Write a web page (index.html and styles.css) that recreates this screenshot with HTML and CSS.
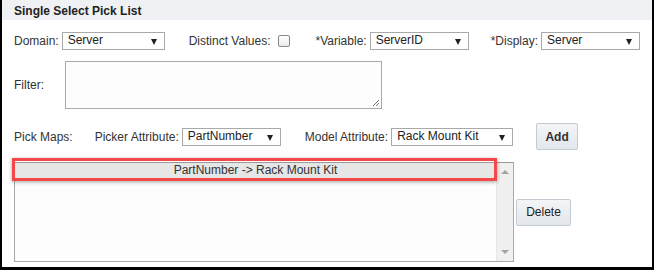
FILE: index.html
```html
<!DOCTYPE html>
<html>
<head>
<meta charset="utf-8">
<link rel="stylesheet" href="styles.css">
</head>
<body>
<div class="frame">
  <div class="header">Single Select Pick List</div>
  <div class="content">
    <div class="row row-top">
      <span class="lbl">Domain:</span>
      <div class="sel sel-domain"><span>Server</span><i class="arrow"></i></div>
      <span class="lbl lbl-distinct">Distinct Values:</span>
      <span class="checkbox"></span>
      <span class="lbl lbl-variable">*Variable:</span>
      <div class="sel sel-var"><span>ServerID</span><i class="arrow"></i></div>
      <span class="lbl lbl-display">*Display:</span>
      <div class="sel sel-disp"><span>Server</span><i class="arrow"></i></div>
    </div>
    <div class="row row-filter">
      <span class="lbl lbl-filter">Filter:</span>
      <div class="textarea">
        <svg class="grip" width="8" height="8" viewBox="0 0 8 8"><path d="M7 1 L1 7 M7 4 L4 7" stroke="#777" stroke-width="1" fill="none"/></svg>
      </div>
    </div>
    <div class="row row-maps">
      <span class="lbl">Pick Maps:</span>
      <span class="lbl lbl-picker">Picker Attribute:</span>
      <div class="sel sel-picker"><span>PartNumber</span><i class="arrow"></i></div>
      <span class="lbl lbl-model">Model Attribute:</span>
      <div class="sel sel-model"><span>Rack Mount Kit</span><i class="arrow"></i></div>
      <button class="btn btn-add">Add</button>
    </div>
    <div class="row row-list">
      <div class="listbox">
        <div class="options">
          <div class="option">PartNumber -&gt; Rack Mount Kit</div>
        </div>
        <div class="scrollbar">
          <i class="sb-up"></i>
          <i class="sb-down"></i>
        </div>
        <div class="highlight"></div>
      </div>
      <button class="btn btn-delete">Delete</button>
    </div>
  </div>
</div>
</body>
</html>
```
FILE: styles.css
```css
html, body {
  margin: 0;
  padding: 0;
  background: #fff;
}
body {
  font-family: "Liberation Sans", Arial, sans-serif;
  font-size: 12px;
  color: #333;
}
.frame {
  width: 654px;
  height: 270px;
  box-sizing: border-box;
  border: 2px solid #000;
  border-top: 0;
  border-bottom-width: 3px;
  overflow: hidden;
}
.header {
  height: 20px;
  background: #f0f1f5;
  padding-left: 12px;
  font-weight: bold;
  font-size: 12px;
  line-height: 22px;
  color: #222;
}
.content {
  padding: 12px 0 0 12px;
}
.row {
  display: flex;
  align-items: center;
}
.lbl {
  white-space: nowrap;
  color: #333;
}
.sel {
  position: relative;
  box-sizing: border-box;
  height: 18px;
  border: 1px solid #a9a9a9;
  background: #fff;
  padding-left: 5px;
  line-height: 15px;
  font-size: 12px;
  color: #222;
  margin-left: 3px;
}
.arrow {
  position: absolute;
  right: 7px;
  top: 6px;
  width: 0;
  height: 0;
  border-left: 3px solid transparent;
  border-right: 3px solid transparent;
  border-top: 6px solid #222;
}
.row-top { height: 17px; }
.sel-domain { width: 103px; }
.lbl-distinct { margin-left: 24px; }
.checkbox {
  box-sizing: border-box;
  width: 12px;
  height: 12px;
  border: 1px solid #8a8a8a;
  border-radius: 2px;
  background: linear-gradient(#fff, #eaeaea);
  margin-left: 7px;
}
.lbl-variable { margin-left: 26px; }
.sel-var { width: 99px; }
.lbl-display { margin-left: 22px; }
.sel-disp { width: 99px; }

.row-filter { margin-top: 12px; }
.lbl-filter { width: 51px; }
.textarea {
  position: relative;
  box-sizing: border-box;
  width: 317px;
  height: 48px;
  border: 1px solid #a9a9a9;
  background: #fdfdfd;
}
.grip {
  position: absolute;
  right: 1px;
  bottom: 1px;
}

.row-maps { margin-top: 14px; height: 27px; }
.lbl-picker { margin-left: 22px; }
.sel-picker { width: 99px; }
.lbl-model { margin-left: 24px; }
.sel-model { width: 122px; }
.btn {
  box-sizing: border-box;
  font-family: "Liberation Sans", Arial, sans-serif;
  font-size: 12px;
  font-weight: bold;
  color: #333;
  border: 1px solid #c3cad2;
  border-radius: 2px;
  background: linear-gradient(#f3f5f7, #e2e7eb);
  padding: 0;
  height: 27px;
}
.btn-add { width: 42px; margin-left: 23px; }

.row-list { margin-top: 12px; }
.listbox {
  position: relative;
  box-sizing: border-box;
  width: 500px;
  height: 100px;
  border: 1px solid #a9a9a9;
  border-top-color: #9a9a9a;
  background: #fdfdfd;
  display: flex;
}
.options {
  flex: 1;
}
.option {
  height: 16px;
  line-height: 14px;
  background: #e6e6e6;
  text-align: center;
  color: #333;
  font-size: 12px;
}
.scrollbar {
  position: relative;
  width: 16px;
  background: #f0f0f0;
  border-left: 1px solid #e6e6e6;
}
.sb-up, .sb-down {
  position: absolute;
  left: 4px;
  width: 0;
  height: 0;
  border-left: 4px solid transparent;
  border-right: 4px solid transparent;
}
.sb-up { top: 7px; border-bottom: 4px solid #a3a3a3; }
.sb-down { bottom: 7px; border-top: 4px solid #a3a3a3; }
.highlight {
  position: absolute;
  left: -3px;
  top: -5px;
  width: 485px;
  height: 23px;
  box-sizing: border-box;
  border: 3px solid #f44848;
  box-shadow: 0 1px 4px rgba(0,0,0,0.35);
}
.btn-delete { width: 55px; margin-left: 2px; font-weight: normal; color: #222; }
```
